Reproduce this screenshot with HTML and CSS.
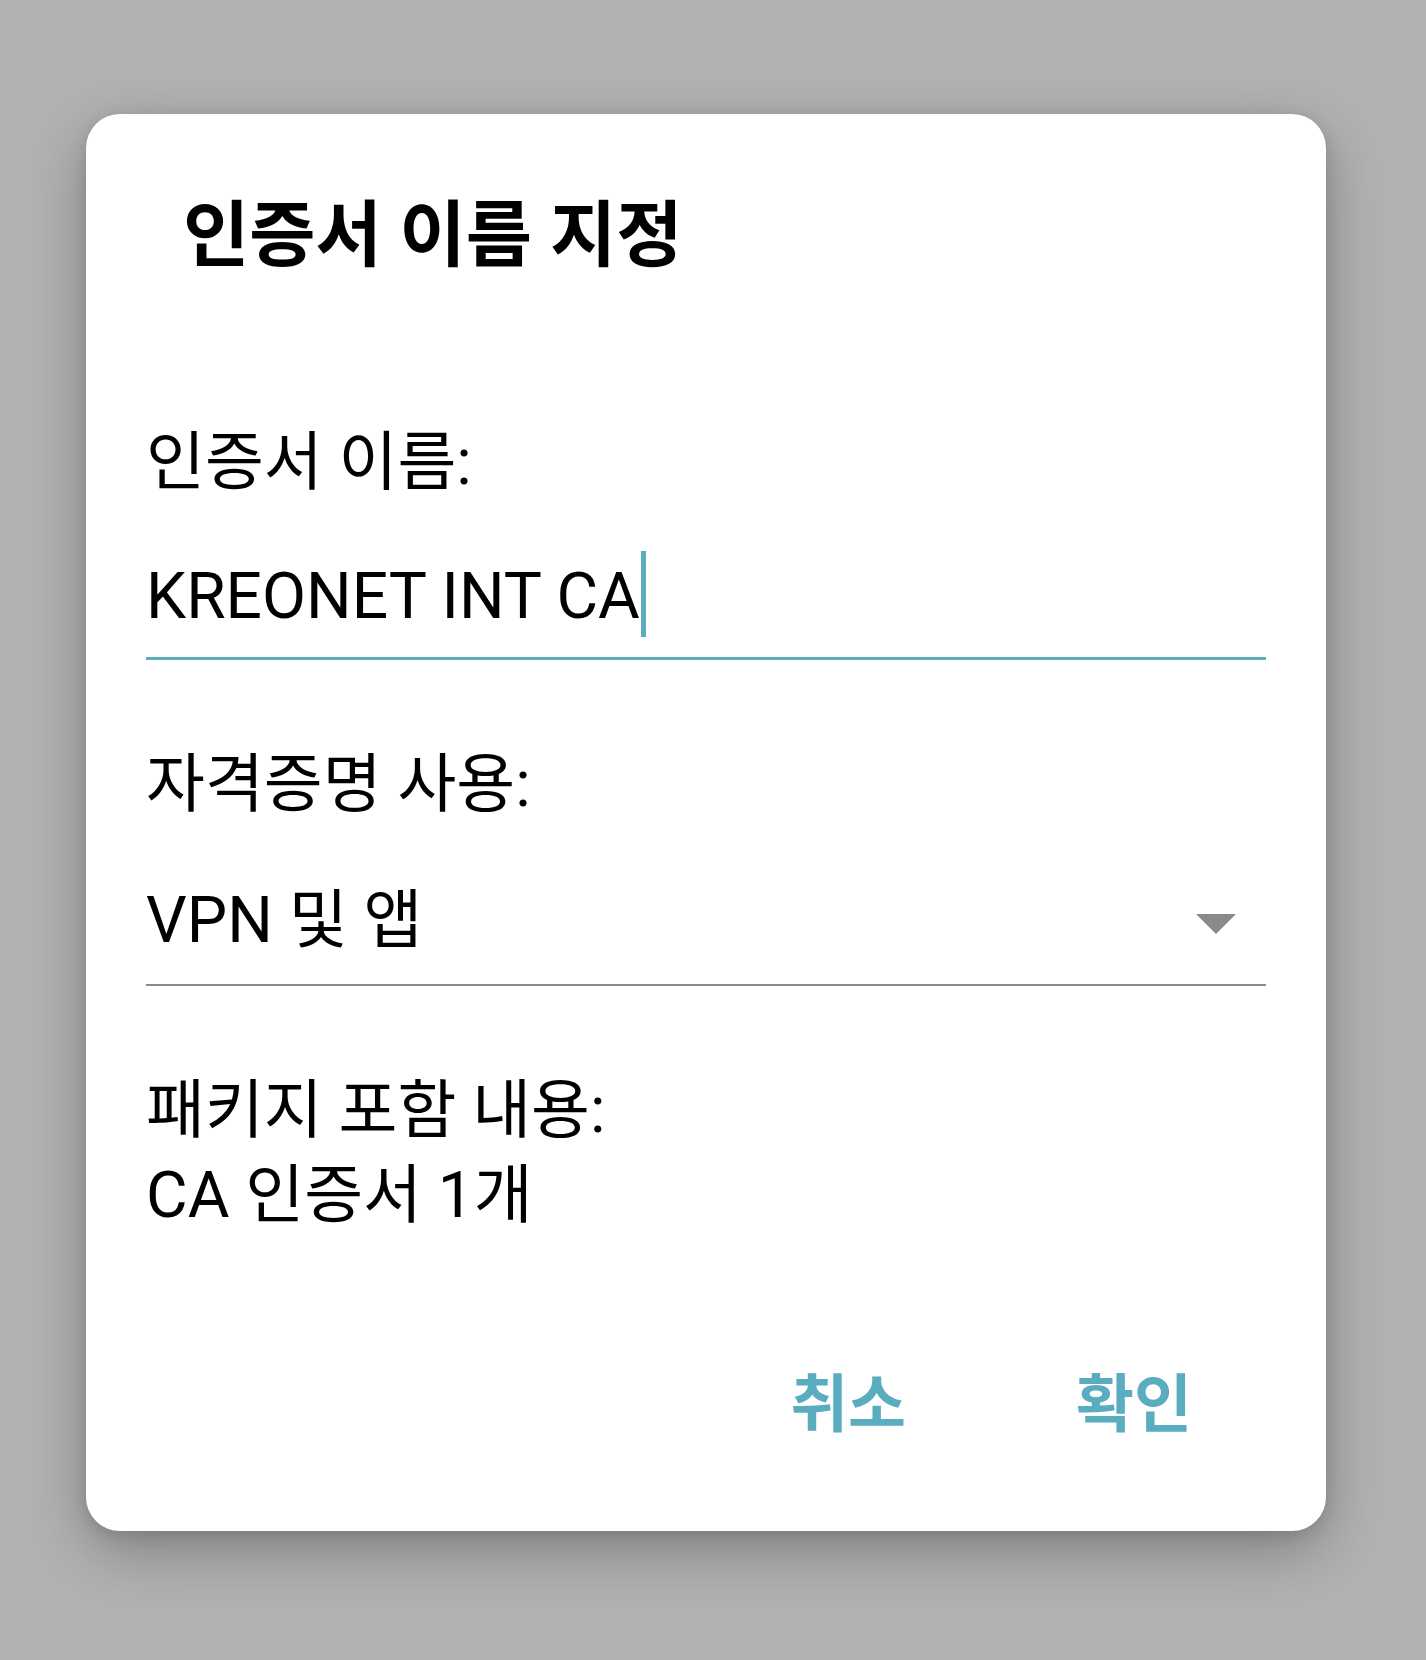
FILE: index.html
```html
<!DOCTYPE html>
<html lang="ko">
<head>
<meta charset="utf-8">
<link rel="stylesheet" href="styles.css">
</head>
<body>
<div class="dialog">
  <h1 class="title">인증서 이름 지정</h1>
  <div class="content">
    <div class="label label-first">인증서 이름:</div>
    <div class="field field-input">
      <span class="value">KREONET INT CA</span><span class="cursor"></span>
    </div>
    <div class="label">자격증명 사용:</div>
    <div class="field field-select">
      <span class="value">VPN 및 앱</span>
      <svg class="arrow" width="40" height="20" viewBox="0 0 40 20"><polygon points="0,0 40,0 20,20" fill="#8a8a8a"/></svg>
    </div>
    <div class="label">패키지 포함 내용:</div>
    <div class="info">CA 인증서 1개</div>
  </div>
  <div class="actions">
    <span class="btn">취소</span>
    <span class="btn">확인</span>
  </div>
</div>
</body>
</html>
```
FILE: styles.css
```css
html, body {
  margin: 0;
  padding: 0;
}
body {
  background: #b2b2b2;
  width: 1426px;
  height: 1660px;
  overflow: hidden;
  font-family: Roboto, "Noto Sans CJK KR", sans-serif;
  color: #000;
}
.dialog {
  margin: 114px 0 0 86px;
  width: 1240px;
  height: 1417px;
  box-sizing: border-box;
  background: #fff;
  border-radius: 34px;
  box-shadow: 0 20px 60px rgba(0, 0, 0, 0.28), 0 4px 16px rgba(0, 0, 0, 0.12);
  display: flex;
  flex-direction: column;
  padding: 0 60px;
}
.title {
  margin: 0;
  padding: 0 0 0 37px;
  font-size: 72px;
  font-weight: 700;
  line-height: 80px;
  margin-top: 82px;
}
.content {
  display: flex;
  flex-direction: column;
}
.label {
  font-size: 64px;
  line-height: 72px;
  margin-top: 89px;
}
.label-first {
  margin-top: 151px;
}
.field {
  display: flex;
  align-items: center;
  font-size: 64px;
  line-height: 72px;
  margin-top: 58px;
  padding-bottom: 20px;
  border-bottom: 3px solid #5aadbe;
}
.field-select {
  margin-top: 64px;
  padding-bottom: 27px;
  border-bottom: 2px solid #8a8a8a;
  justify-content: space-between;
}
.cursor {
  display: inline-block;
  width: 5px;
  height: 86px;
  background: #5aadbe;
  margin: -6px 0 0 1px;
}
.arrow {
  margin-right: 30px;
  margin-top: 6px;
}
.info {
  font-size: 64px;
  line-height: 72px;
  margin-top: 13px;
}
.actions {
  display: flex;
  justify-content: flex-end;
  gap: 170px;
  margin-top: auto;
  margin-bottom: 90px;
  padding-right: 74px;
}
.btn {
  font-size: 63px;
  font-weight: 700;
  color: #5aadbe;
  line-height: 72px;
}
```
